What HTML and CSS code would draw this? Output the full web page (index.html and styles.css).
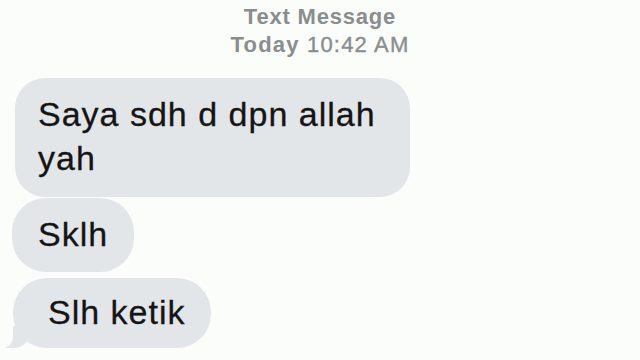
FILE: index.html
```html
<!DOCTYPE html>
<html lang="en">
<head>
  <meta charset="UTF-8">
  <meta name="viewport" content="width=device-width, initial-scale=1.0">
  <title>Text Message</title>
  <link rel="stylesheet" href="styles.css">
</head>
<body>
  <div class="thread">
    <div class="thread-header">
      <div class="service">Text Message</div>
      <div class="stamp"><b>Today</b> 10:42 AM</div>
    </div>
    <div class="messages">
      <div class="bubble first">Saya sdh d dpn allah yah</div>
      <div class="bubble middle">Sklh</div>
      <div class="bubble last">Slh ketik</div>
    </div>
  </div>
</body>
</html>
```

FILE: styles.css
```css
body {
  margin: 0;
  padding: 0;
  background-color: #fbfdfb;
  font-family: "Liberation Sans", Arial, sans-serif;
  color: #151515;
}
.thread {
  width: 640px;
  height: 360px;
  overflow: hidden;
}
.thread-header {
  padding-top: 3px;
  text-align: center;
  color: #8a8d8e;
  font-size: 22px;
  line-height: 28px;
  letter-spacing: 0.8px;
}
.service {
  font-weight: bold;
}
.stamp {
  letter-spacing: 1.2px;
  -webkit-text-stroke: 0.4px #8a8d8e;
}
.stamp b {
  font-weight: bold;
  -webkit-text-stroke: 0;
}
.messages {
  display: flex;
  flex-direction: column;
  align-items: flex-start;
  padding-left: 13px;
  margin-top: 19px;
}
.bubble {
  position: relative;
  background-color: #e3e6e8;
  border-radius: 34px;
  font-size: 34px;
  line-height: 44px;
  letter-spacing: 1px;
  max-width: 395px;
  box-sizing: border-box;
  -webkit-text-stroke: 0.3px #151515;
}
.bubble.first {
  margin-left: 2px;
  width: 395px;
  border-radius: 30px;
  padding: 14px 26px 17px 23px;
}
.bubble.middle {
  margin-top: 1px;
  margin-left: -1px;
  padding: 14px 26px 16px 26px;
}
.bubble.last {
  margin-top: 6px;
  padding: 12px 25px 14px 35px;
}
.bubble.last::before {
  content: "";
  position: absolute;
  bottom: 0;
  left: -7px;
  width: 24px;
  height: 22px;
  background-color: #e3e6e8;
  border-bottom-right-radius: 16px;
}
.bubble.last::after {
  content: "";
  position: absolute;
  bottom: 0;
  left: -13px;
  width: 13px;
  height: 22px;
  background-color: #fbfdfb;
  border-bottom-right-radius: 11px;
}
```
